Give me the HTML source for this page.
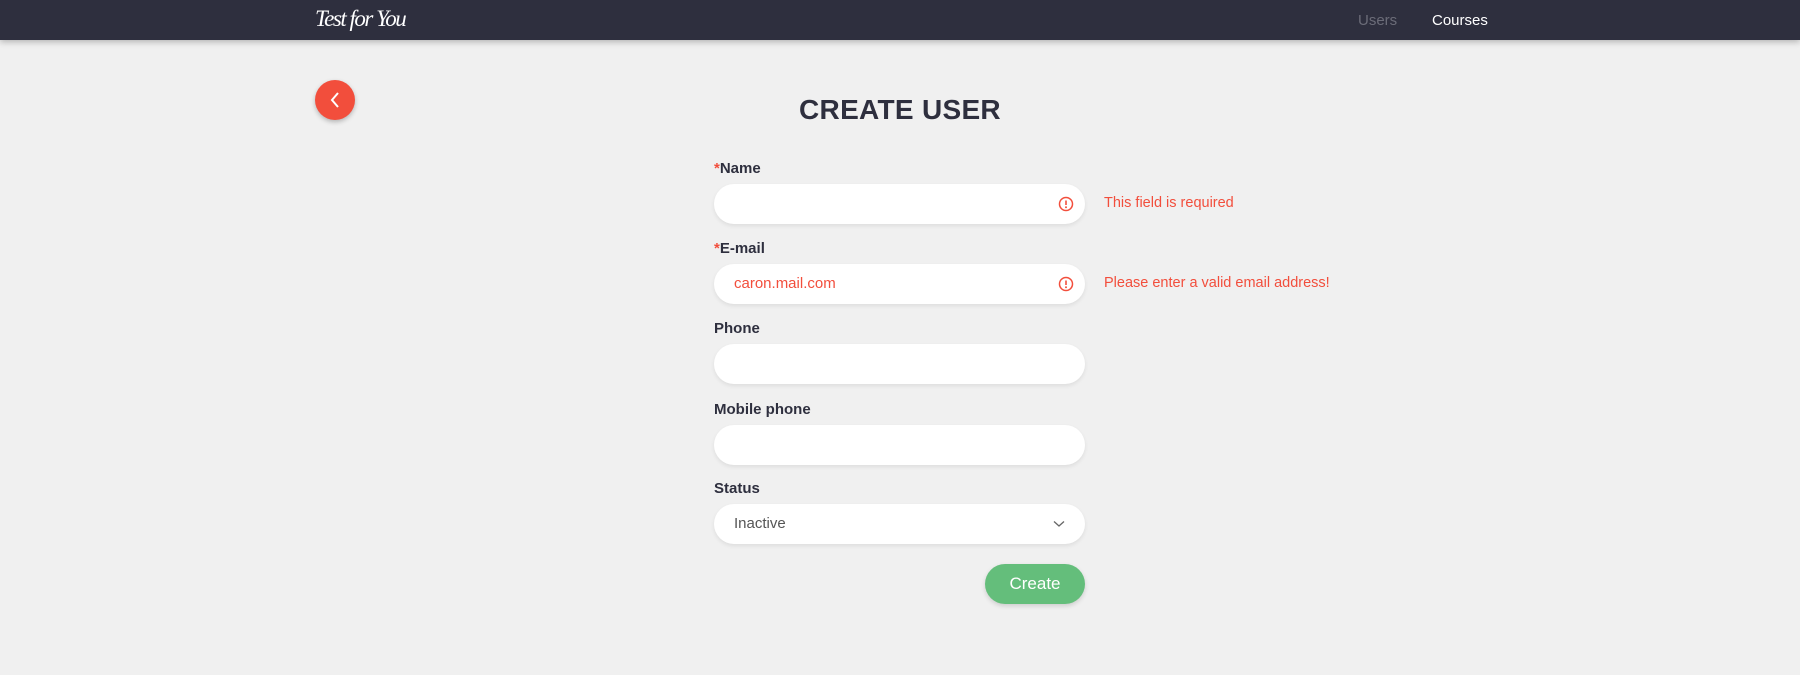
<!DOCTYPE html>
<html><head><meta charset="utf-8"><style>
*{box-sizing:border-box;margin:0;padding:0}
body{width:1800px;height:675px;background:#f0f0f0;font-family:"Liberation Sans",sans-serif;position:relative;overflow:hidden}
.nav{position:absolute;left:0;top:0;width:1800px;height:40px;background:#2e2f3e;box-shadow:0 2px 6px rgba(0,0,0,.25)}
.logo{position:absolute;left:315px;top:6px;color:#fff;font-family:"Liberation Serif",serif;font-style:italic;font-size:23px;letter-spacing:-1.5px}
.nl{position:absolute;top:12px;font-size:15px}
.back{position:absolute;left:315px;top:80px;width:40px;height:40px;border-radius:50%;background:#f24e3c;box-shadow:0 2px 5px rgba(0,0,0,.25)}
h1{position:absolute;left:0;width:1800px;top:94px;text-align:center;font-size:28px;font-weight:700;color:#2e2f3e;letter-spacing:0.3px}
.lbl{position:absolute;left:714px;font-size:15px;font-weight:700;color:#2e2f3e}
.lbl b{color:#f24e3c}
.in{position:absolute;left:714px;width:371px;height:40px;background:#fff;border-radius:20px;box-shadow:0 2px 4px rgba(0,0,0,.08);font-size:15px;padding:11px 20px}
.err{position:absolute;left:1104px;font-size:14.5px;color:#f24e3c}
.ic{position:absolute;right:11px;top:12px;width:16px;height:16px}
.btn{position:absolute;left:985px;top:564px;width:100px;height:40px;border-radius:20px;background:#64be7b;color:#fff;font-size:17px;text-align:center;line-height:40px;box-shadow:0 2px 5px rgba(0,0,0,.15)}
</style></head><body>
<div class="nav">
<div class="logo">Test for You</div>
<div class="nl" style="left:1358px;color:#6b6c78">Users</div>
<div class="nl" style="left:1432px;color:#fff">Courses</div>
</div>
<div class="back"><svg width="40" height="40"><path d="M23 13 L17 20 L23 27" stroke="#fff" stroke-width="2" fill="none"/></svg></div>
<h1>CREATE USER</h1>

<div class="lbl" style="top:160px"><b>*</b>Name</div>
<div class="in" style="top:184px"><svg class="ic" viewBox="0 0 16 16"><circle cx="8" cy="8" r="6.5" stroke="#f24e3c" stroke-width="1.5" fill="none"/><path d="M8 4.5v4.5" stroke="#f24e3c" stroke-width="1.6"/><circle cx="8" cy="11.3" r="1" fill="#f24e3c"/></svg></div>
<div class="err" style="top:195px">This field is required</div>

<div class="lbl" style="top:240px"><b>*</b>E-mail</div>
<div class="in" style="top:264px;color:#f24e3c">caron.mail.com<svg class="ic" viewBox="0 0 16 16"><circle cx="8" cy="8" r="6.5" stroke="#f24e3c" stroke-width="1.5" fill="none"/><path d="M8 4.5v4.5" stroke="#f24e3c" stroke-width="1.6"/><circle cx="8" cy="11.3" r="1" fill="#f24e3c"/></svg></div>
<div class="err" style="top:275px">Please enter a valid email address!</div>

<div class="lbl" style="top:320px">Phone</div>
<div class="in" style="top:344px"></div>

<div class="lbl" style="top:401px">Mobile phone</div>
<div class="in" style="top:425px"></div>

<div class="lbl" style="top:480px">Status</div>
<div class="in" style="top:504px;color:#555">Inactive<svg style="position:absolute;right:20px;top:16px" width="12" height="8"><path d="M1 1.5 L6 6 L11 1.5" stroke="#666" stroke-width="1.3" fill="none"/></svg></div>

<div class="btn">Create</div>
</body></html>
